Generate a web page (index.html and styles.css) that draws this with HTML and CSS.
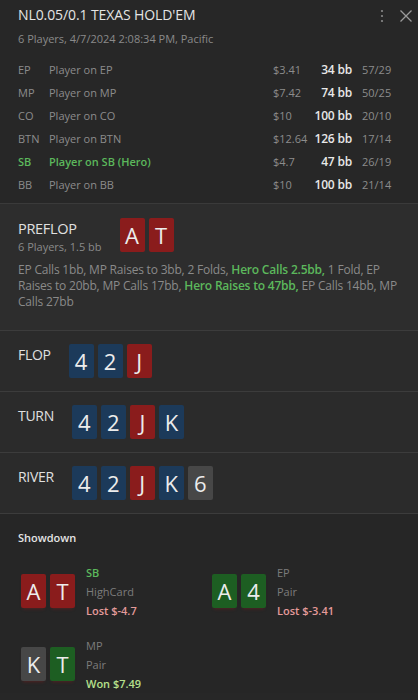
FILE: index.html
```html
<!DOCTYPE html>
<html>
<head>
<meta name="viewport" content="width=device-width, initial-scale=1">
<title>Hand History</title>
<link rel="stylesheet" href="styles.css">
</head>
<body>

<div class="panel">

  <div class="header">
    <div class="head-text">
      <h1 class="title">NL0.05/0.1 TEXAS HOLD'EM</h1>
      <div class="sub">6 Players, 4/7/2024 2:08:34 PM, Pacific</div>
    </div>
    <div class="head-icons">
      <svg width="4" height="14" viewBox="0 0 4 14"><circle cx="2" cy="2" r="1.1" fill="#8a8a8a"/><circle cx="2" cy="7" r="1.1" fill="#8a8a8a"/><circle cx="2" cy="12" r="1.1" fill="#8a8a8a"/></svg>
      <svg width="14" height="14" viewBox="0 0 14 14"><path d="M1.5 1.5 L12.5 12.5 M12.5 1.5 L1.5 12.5" stroke="#9a9a9a" stroke-width="1.3"/></svg>
    </div>
  </div>

  <div class="players">
    <div class="prow"><span>EP</span><span>Player on EP</span><span>$3.41</span><b>34 bb</b><span class="stat">57/29</span></div>
    <div class="prow"><span>MP</span><span>Player on MP</span><span>$7.42</span><b>74 bb</b><span class="stat">50/25</span></div>
    <div class="prow"><span>CO</span><span>Player on CO</span><span>$10</span><b>100 bb</b><span class="stat">20/10</span></div>
    <div class="prow"><span>BTN</span><span>Player on BTN</span><span>$12.64</span><b>126 bb</b><span class="stat">17/14</span></div>
    <div class="prow hero"><span>SB</span><span>Player on SB (Hero)</span><span>$4.7</span><b>47 bb</b><span class="stat">26/19</span></div>
    <div class="prow"><span>BB</span><span>Player on BB</span><span>$10</span><b>100 bb</b><span class="stat">21/14</span></div>
  </div>

  <div class="street preflop">
    <div class="street-head">
      <div>
        <div class="street-name big">PREFLOP</div>
        <div class="sub">6 Players, 1.5 bb</div>
      </div>
      <div class="cards">
        <span class="card red">A</span><span class="card red">T</span>
      </div>
    </div>
    <p class="actions">EP Calls 1bb, MP Raises to 3bb, 2 Folds, <b>Hero Calls 2.5bb,</b> 1 Fold, EP Raises to 20bb, MP Calls 17bb, <b>Hero Raises to 47bb,</b> EP Calls 14bb, MP Calls 27bb</p>
  </div>

  <div class="street">
    <div class="street-head">
      <div class="street-name">FLOP</div>
      <div class="cards">
        <span class="card blue">4</span><span class="card blue">2</span><span class="card red">J</span>
      </div>
    </div>
  </div>

  <div class="street">
    <div class="street-head">
      <div class="street-name">TURN</div>
      <div class="cards">
        <span class="card blue">4</span><span class="card blue">2</span><span class="card red">J</span><span class="card blue">K</span>
      </div>
    </div>
  </div>

  <div class="street">
    <div class="street-head">
      <div class="street-name">RIVER</div>
      <div class="cards">
        <span class="card blue">4</span><span class="card blue">2</span><span class="card red">J</span><span class="card blue">K</span><span class="card grey">6</span>
      </div>
    </div>
  </div>

  <div class="showdown">
    <div class="sd-title">Showdown</div>
    <div class="hands">
      <div class="hand">
        <div class="cards"><span class="card red sd">A</span><span class="card red sd">T</span></div>
        <div class="hand-info">
          <div class="green">SB</div>
          <div>HighCard</div>
          <div class="lost">Lost $-4.7</div>
        </div>
      </div>
      <div class="hand">
        <div class="cards"><span class="card green-card sd">A</span><span class="card green-card sd">4</span></div>
        <div class="hand-info">
          <div>EP</div>
          <div>Pair</div>
          <div class="lost">Lost $-3.41</div>
        </div>
      </div>
      <div class="hand">
        <div class="cards"><span class="card grey sd">K</span><span class="card green-card sd">T</span></div>
        <div class="hand-info">
          <div>MP</div>
          <div>Pair</div>
          <div class="won">Won $7.49</div>
        </div>
      </div>
    </div>
  </div>

</div>

</body>
</html>
```

FILE: styles.css
```css
body {
  margin: 0;
  background-color: #262626;
  font-family: "Open Sans", "Noto Sans", sans-serif;
  color: #8c8c8c;
}

.panel {
  width: 418px;
  height: 700px;
  overflow: hidden;
  background-color: #272727;
}

/* header */
.header {
  display: flex;
  justify-content: space-between;
  padding: 4px 0 0 18px;
}

.title {
  margin: 0;
  font-size: 14px;
  font-weight: normal;
  line-height: 22px;
  color: #e4e4e4;
  letter-spacing: -0.1px;
}

.sub {
  font-size: 11px;
  line-height: 18px;
  color: #8a8a8a;
}

.header .sub {
  margin-top: 4px;
}

.head-icons {
  display: flex;
  align-items: center;
  gap: 15px;
  height: 14px;
  padding: 5px 5px 0 0;
}

/* players */
.players {
  padding: 10px 18px 7px 18px;
  border-bottom: 1px solid #3a3a3a;
}

.prow {
  display: grid;
  grid-template-columns: 31px 1fr 40px 39px 48px;
  height: 23px;
  align-items: center;
  font-size: 11px;
  color: #8c8c8c;
}

.prow b {
  text-align: right;
  font-size: 12px;
  color: #e8e8e8;
  font-weight: 600;
  letter-spacing: -0.2px;
}

.prow .stat {
  padding-left: 10px;
}

.prow.hero span:nth-child(1),
.prow.hero span:nth-child(2) {
  color: #5cb85c;
  font-weight: 600;
}

/* streets */
.street {
  background-color: #2b2b2b;
  padding: 13px 18px 13px 18px;
  border-bottom: 1px solid #3c3c3c;
}

.street.preflop {
  background-color: #2d2d2d;
  padding: 14px 18px 20px 18px;
}

.street-head {
  display: flex;
  align-items: flex-start;
  gap: 18px;
}

.street-name {
  font-size: 14px;
  line-height: 22px;
  color: #e0e0e0;
  letter-spacing: -0.3px;
}

.street-name.big {
  font-size: 14.5px;
  line-height: 20px;
  margin-top: 1px;
}

.preflop .sub {
  line-height: 16px;
}

.actions {
  margin: 7px 0 0 0;
  font-size: 12px;
  line-height: 16px;
  color: #8a8a8a;
  letter-spacing: -0.2px;
}

.actions b {
  color: #5cb85c;
  font-weight: 600;
}

/* cards */
.cards {
  display: flex;
  gap: 4px;
}

.card {
  display: flex;
  align-items: center;
  justify-content: center;
  width: 25px;
  height: 34px;
  font-size: 22px;
  color: #ececec;
  border-radius: 2px;
}

.card.red { background-color: #8a1c1c; }
.card.blue { background-color: #1c3a5a; }
.card.grey { background-color: #474747; }
.card.green-card { background-color: #1d5e22; }

.card.sd {
  box-shadow: 0 3px 3px -2px rgba(160, 30, 30, 0.35);
}

/* showdown */
.showdown {
  background-color: #262626;
  padding: 16px 18px 0 18px;
}

.sd-title {
  font-size: 11px;
  font-weight: 600;
  color: #e4e4e4;
  line-height: 16px;
}

.hands {
  display: grid;
  grid-template-columns: 191px 1fr;
  row-gap: 16px;
  padding: 17px 0 0 3px;
}

.hand {
  display: flex;
  align-items: flex-start;
  gap: 11px;
}

.hand .cards {
  margin-top: 11px;
}

.hand-info {
  font-size: 11px;
  line-height: 19px;
  color: #7c7c7c;
}

.hand-info .green {
  color: #5cb85c;
  font-weight: 600;
}

.hand-info .lost {
  color: #e49a9a;
  font-weight: 600;
}

.hand-info .won {
  color: #b6e08c;
  font-weight: 600;
}
```
